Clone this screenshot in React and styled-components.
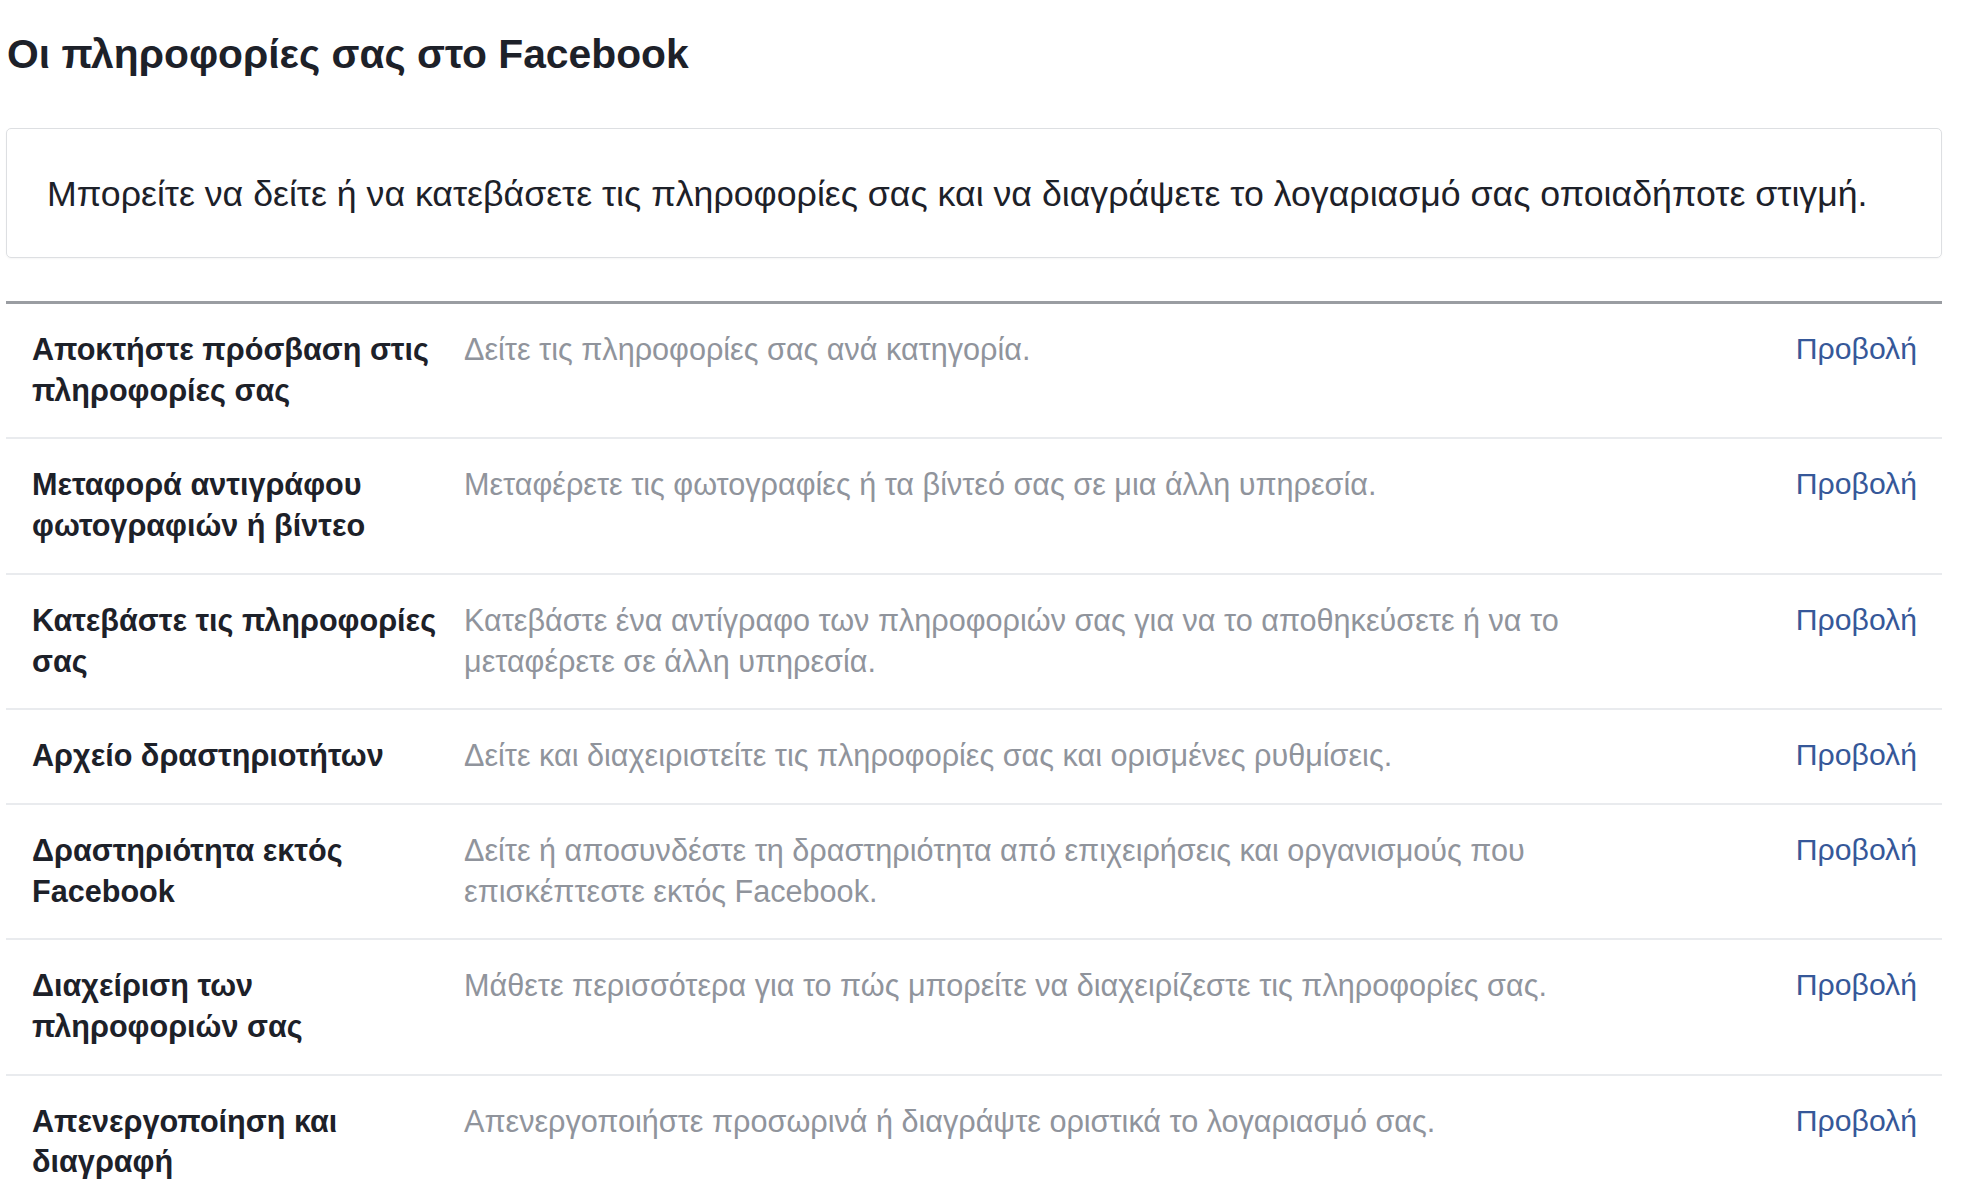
import React from "react";
import styled, {createGlobalStyle} from "styled-components";

const GlobalStyle = createGlobalStyle`
  body {
    margin: 0;
    background: #fff;
    font-family: "Liberation Sans", Arial, sans-serif;
    color: #1d2129;
  }
`

const Page = styled.div`
  width: 1936px;
  padding: 30px 0 0 6px;
`

const Title = styled.h2`
  margin: 0 0 0 1px;
  font-size: 40.8px;
  line-height: 48px;
  font-weight: bold;
  color: #1d2129;
`

const Notice = styled.div`
  margin-top: 50px;
  border: 1px solid #dddfe2;
  border-radius: 5px;
  padding: 45px 40px 42px;
  font-size: 35.7px;
  line-height: 41px;
  color: #1d2129;
  box-shadow: 0 1px 2px rgba(0, 0, 0, 0.04);
`

const List = styled.div`
  margin-top: 43px;
  border-top: 3px solid #9a9da2;
`

const Row = styled.div`
  display: grid;
  grid-template-columns: 418px 1150px 1fr;
  column-gap: 14px;
  align-items: start;
  padding: 25px 25px 27px 26px;
  border-bottom: 2px solid #e9ebee;
  font-size: 30.6px;
  line-height: 40.7px;
`

const Label = styled.div`
  font-weight: bold;
  color: #1d2129;
`

const Description = styled.div`
  color: #90949c;
`

const ViewLink = styled.a`
  justify-self: end;
  color: #365899;
  font-size: 30.2px;
  text-decoration: none;
  cursor: pointer;
`

const items = [
    {label: "Αποκτήστε πρόσβαση στις πληροφορίες σας", text: "Δείτε τις πληροφορίες σας ανά κατηγορία."},
    {label: "Μεταφορά αντιγράφου φωτογραφιών ή βίντεο", text: "Μεταφέρετε τις φωτογραφίες ή τα βίντεό σας σε μια άλλη υπηρεσία."},
    {label: "Κατεβάστε τις πληροφορίες σας", text: "Κατεβάστε ένα αντίγραφο των πληροφοριών σας για να το αποθηκεύσετε ή να το μεταφέρετε σε άλλη υπηρεσία."},
    {label: "Αρχείο δραστηριοτήτων", text: "Δείτε και διαχειριστείτε τις πληροφορίες σας και ορισμένες ρυθμίσεις."},
    {label: "Δραστηριότητα εκτός Facebook", text: "Δείτε ή αποσυνδέστε τη δραστηριότητα από επιχειρήσεις και οργανισμούς που επισκέπτεστε εκτός Facebook."},
    {label: "Διαχείριση των πληροφοριών σας", text: "Μάθετε περισσότερα για το πώς μπορείτε να διαχειρίζεστε τις πληροφορίες σας."},
    {label: "Απενεργοποίηση και διαγραφή", text: "Απενεργοποιήστε προσωρινά ή διαγράψτε οριστικά το λογαριασμό σας."},
]

export default function App() {
    return (
        <>
            <GlobalStyle/>
            <Page>
                <Title>Οι πληροφορίες σας στο Facebook</Title>
                <Notice>
                    Μπορείτε να δείτε ή να κατεβάσετε τις πληροφορίες σας και να διαγράψετε το λογαριασμό σας οποιαδήποτε στιγμή.
                </Notice>
                <List>
                    {items.map(item => (
                        <Row key={item.label}>
                            <Label>{item.label}</Label>
                            <Description>{item.text}</Description>
                            <ViewLink>Προβολή</ViewLink>
                        </Row>
                    ))}
                </List>
            </Page>
        </>
    )
}
